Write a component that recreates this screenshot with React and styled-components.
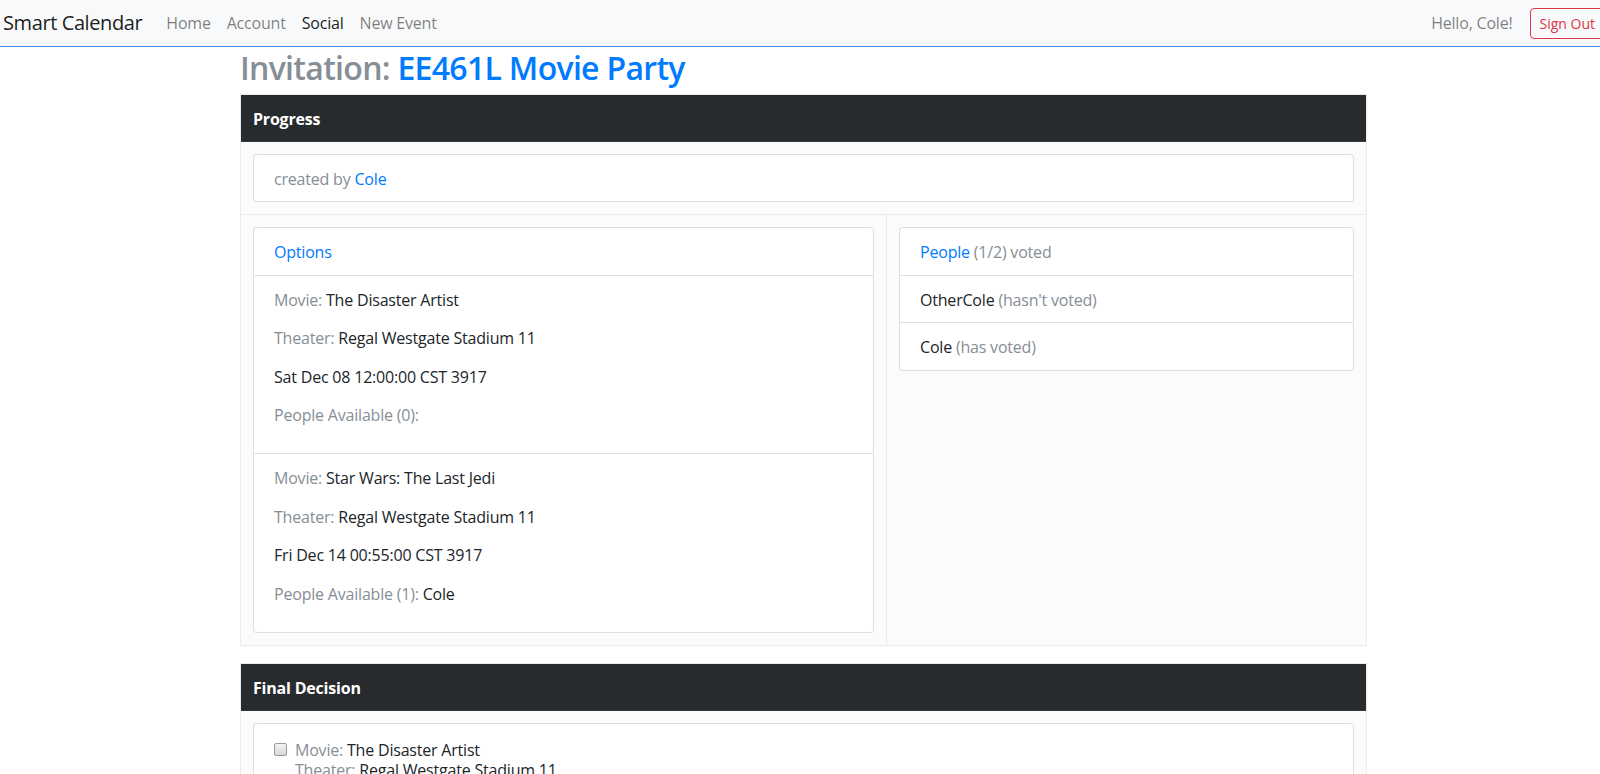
import React from 'react';
import styled, { createGlobalStyle } from 'styled-components';

const GlobalStyle = createGlobalStyle`
  html, body {
    margin: 0;
    padding: 0;
  }
  body {
    font-family: "Open Sans", "Noto Sans", sans-serif;
    font-size: 16px;
    line-height: 1.4;
    letter-spacing: -0.2px;
    color: #212529;
    background: #fff;
    overflow-x: hidden;
  }
  a {
    text-decoration: none;
  }
`;

const options = [
    { movie: 'The Disaster Artist', theater: 'Regal Westgate Stadium 11', time: 'Sat Dec 08 12:00:00 CST 3917', people: [] },
    { movie: 'Star Wars: The Last Jedi', theater: 'Regal Westgate Stadium 11', time: 'Fri Dec 14 00:55:00 CST 3917', people: ['Cole'] },
];

const voters = [
    { name: 'OtherCole', voted: false },
    { name: 'Cole', voted: true },
];

export default function App() {
    return (
        <>
            <GlobalStyle />
            <Navbar>
                <Brand href='#'>Smart Calendar</Brand>
                <NavList>
                    <li><NavLink href='#'>Home</NavLink></li>
                    <li><NavLink href='#'>Account</NavLink></li>
                    <li><NavLink href='#' $active>Social</NavLink></li>
                    <li><NavLink href='#'>New Event</NavLink></li>
                </NavList>
                <NavRight>
                    <Greeting>Hello, Cole!</Greeting>
                    <SignOut>Sign Out</SignOut>
                </NavRight>
            </Navbar>

            <Main>
                <Title>Invitation: <Blue>EE461L Movie Party</Blue></Title>

                <Panel>
                    <PanelHead>Progress</PanelHead>
                    <Row>
                        <Card>
                            <CardLine><Muted>created by </Muted><Blue as='a' href='#'>Cole</Blue></CardLine>
                        </Card>
                    </Row>
                    <Split>
                        <Cell>
                            <Card>
                                <CardLine><Blue as='a' href='#'>Options</Blue></CardLine>
                                {options.map((o, i) => (
                                    <CardLine key={i}>
                                        <Para><Muted>Movie: </Muted>{o.movie}</Para>
                                        <Para><Muted>Theater: </Muted>{o.theater}</Para>
                                        <Para>{o.time}</Para>
                                        <Para><Muted>People Available ({o.people.length}): </Muted>{o.people.join(', ')}</Para>
                                    </CardLine>
                                ))}
                            </Card>
                        </Cell>
                        <Cell>
                            <Card>
                                <CardLine><Blue as='a' href='#'>People</Blue><Muted> (1/2) voted</Muted></CardLine>
                                {voters.map(v => (
                                    <CardLine key={v.name}>
                                        {v.name}<Muted> ({v.voted ? 'has voted' : "hasn't voted"})</Muted>
                                    </CardLine>
                                ))}
                            </Card>
                        </Cell>
                    </Split>
                </Panel>

                <Panel>
                    <PanelHead>Final Decision</PanelHead>
                    <Row>
                        <Card>
                            <DecisionBody>
                                {options.map((o, i) => (
                                    <CheckRow key={i}>
                                        <CheckBox />
                                        <div>
                                            <Muted>Movie: </Muted>{o.movie}<br />
                                            <Muted>Theater: </Muted>{o.theater}<br />
                                            {o.time}
                                        </div>
                                    </CheckRow>
                                ))}
                            </DecisionBody>
                        </Card>
                    </Row>
                </Panel>
            </Main>
        </>
    );
}

const Navbar = styled.nav`
    display: flex;
    align-items: center;
    height: 46px;
    padding-left: 3px;
    background: #f8f9fa;
    border-bottom: 1px solid #3d8ef0;
    overflow: hidden;
`;

const Brand = styled.a`
    font-size: 20px;
    letter-spacing: -0.4px;
    color: rgba(0, 0, 0, .9);
    margin-right: 16px;
    white-space: nowrap;
`;

const NavList = styled.ul`
    display: flex;
    list-style: none;
    margin: 0;
    padding: 0;
`;

const NavLink = styled.a`
    display: block;
    padding: 0 8px;
    color: ${p => p.$active ? 'rgba(0, 0, 0, .9)' : 'rgba(0, 0, 0, .5)'};
`;

const NavRight = styled.div`
    display: flex;
    align-items: center;
    margin-left: auto;
    margin-right: -4px;
`;

const Greeting = styled.span`
    color: rgba(0, 0, 0, .5);
    margin-right: 18px;
`;

const SignOut = styled.button`
    font-family: inherit;
    font-size: 14px;
    line-height: 21px;
    padding: 4px 8px;
    color: #dc3545;
    background: transparent;
    border: 1px solid #dc3545;
    border-radius: 4px;
`;

const Main = styled.main`
    width: 1127px;
    margin-left: 240px;
`;

const Title = styled.h2`
    margin: 2px 0 7px;
    font-size: 32px;
    font-weight: 600;
    letter-spacing: -0.7px;
    line-height: 38px;
    color: #868e96;
`;

const Blue = styled.span`
    color: #007bff;
`;

const Muted = styled.span`
    color: #868e96;
`;

const Panel = styled.section`
    border: 1px solid #e9ecef;
    background: #fbfbfb;
    margin-bottom: 17px;
`;

const PanelHead = styled.div`
    background: #272b2e;
    color: #fff;
    font-weight: 700;
    padding: 13px 12px 11px;
    line-height: 22px;
    border-bottom: 1px solid #32383e;
`;

const Row = styled.div`
    padding: 12px;
`;

const Split = styled.div`
    display: grid;
    grid-template-columns: 645px 1fr;
    border-top: 1px solid #e9ecef;
`;

const Cell = styled.div`
    padding: 12px;
    & + & {
        border-left: 1px solid #e9ecef;
    }
`;

const Card = styled.div`
    background: #fff;
    border: 1px solid rgba(0, 0, 0, .125);
    border-radius: 4px;
`;

const CardLine = styled.div`
    padding: 13px 20px 11px;
    & + & {
        border-top: 1px solid rgba(0, 0, 0, .125);
    }
`;

const Para = styled.p`
    margin: 0 0 16px;
`;

const DecisionBody = styled.div`
    padding: 16px 20px 14px;
    display: flex;
    flex-direction: column;
    gap: 16px;
`;

const CheckRow = styled.label`
    display: flex;
    align-items: flex-start;
    gap: 8px;
    line-height: 20px;
`;

const CheckBox = styled.span`
    flex: none;
    width: 11px;
    height: 11px;
    margin-top: 3px;
    border: 1px solid #9a9a9a;
    border-radius: 2px;
    background: linear-gradient(#f4f4f4, #d8d8d8);
`;
